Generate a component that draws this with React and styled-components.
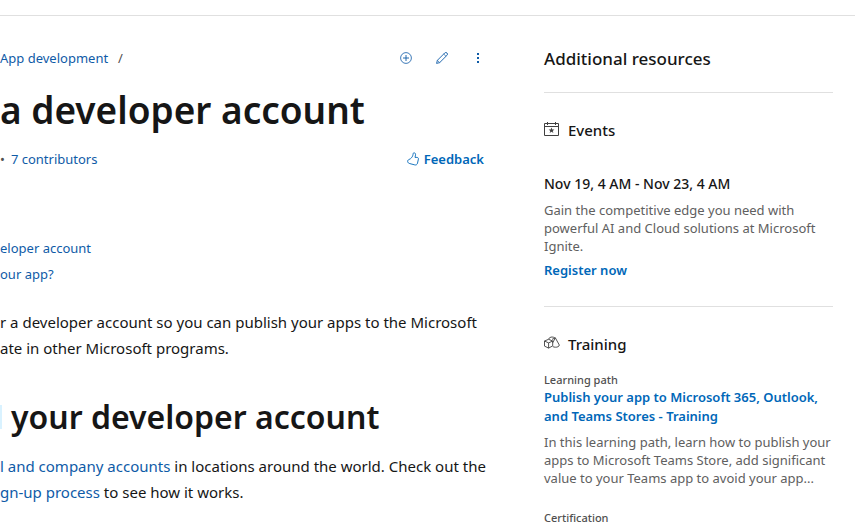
import styled, { createGlobalStyle } from "styled-components";

const tocItems = [
  { id: "open", title: "eloper account" },
  { id: "publish", title: "our app?" },
];

const AddIcon = () => (
  <svg width="12" height="12" viewBox="0 0 12 12" fill="none" stroke="currentColor" aria-hidden="true">
    <circle cx="6" cy="6" r="5.4" strokeWidth="0.8" />
    <path d="M6 3v6M3 6h6" strokeWidth="0.9" />
  </svg>
);

const PencilIcon = () => (
  <svg width="12" height="12" viewBox="0 0 12 12" fill="none" stroke="currentColor" strokeWidth="0.9" strokeLinejoin="round" aria-hidden="true">
    <path d="M0.6 11.4l0.8-3.1L8.7 1a1.6 1.6 0 0 1 2.3 2.3L3.7 10.6z" />
    <path d="M7.7 2l2.3 2.3M1.4 8.3l2.3 2.3" strokeWidth="0.7" />
  </svg>
);

const MoreIcon = () => (
  <svg width="12" height="12" viewBox="0 0 12 12" fill="currentColor" aria-hidden="true">
    <path d="M5 1h2v2H5zM5 5h2v2H5zM5 9h2v2H5z" />
  </svg>
);

const ThumbIcon = () => (
  <svg width="12" height="14" viewBox="0 0 12 14" fill="none" stroke="currentColor" strokeWidth="0.9" strokeLinejoin="round" aria-hidden="true">
    <path d="M3.5 6.7C5 5.5 5.7 4.3 6 2.6c.1-1.5.5-1.9 1.2-1.8 1.100.1 1.500 1.200 1.300 2.300L8 5.400h1.900c1.100 0 1.700.7 1.500 1.700l-.9 4.100c-.3 1.400-1.400 2-2.700 1.700l-5-1.300C1.600 11.300.9 10.700.7 9.700c-.2-1 .2-1.700 1.100-2.100z" />
  </svg>
);

const EventIcon = () => (
  <svg width="16" height="16" viewBox="0 0 16 16" fill="none" stroke="currentColor" aria-hidden="true">
    <path d="M0.5 2.5h14v12h-14zM0.5 5.5h14M3.5 1v3M11.5 1v3" />
    <path d="M7.5 6.6l.8 2h2.1L8.7 9.9l.7 2.1-1.9-1.3L5.6 12l.7-2.1-1.7-1.3h2.1z" fill="currentColor" stroke="none" />
  </svg>
);

const TrainingIcon = () => (
  <svg width="16" height="16" viewBox="0 0 16 16" fill="none" stroke="currentColor" strokeWidth="0.9" strokeLinejoin="round" aria-hidden="true">
    <path d="M4.600 4.300L8.700 6v4.900l-4.100 2.200-4.100-2V6zM.5 6l4.100 1.900L8.700 6M4.600 7.900v5.200" />
    <path d="M4.400 4.300C5.200 2.700 6.600 2 8.100 2c1.200 0 2.200.4 2.900 1.200M8.700 7.800l2.600-5 4 7.200c0 1.500-1.900 2.300-3.900 2.200-1 0-1.900-.2-2.600-.6M11.300 2.800L8 4.400" />
  </svg>
);

export default function App() {
  return (
    <>
      <GlobalStyle />
      <TopBar />
      <Layout>
        <Article>
          <BreadcrumbRow>
            <Breadcrumbs aria-label="Breadcrumb">
              <TextLink href="#app-development">App development</TextLink>
              <Separator>/</Separator>
            </Breadcrumbs>
            <Actions>
              <IconButton type="button" aria-label="Add to collection">
                <AddIcon />
              </IconButton>
              <IconButton type="button" aria-label="Edit">
                <PencilIcon />
              </IconButton>
              <IconButton type="button" aria-label="More actions">
                <MoreIcon />
              </IconButton>
            </Actions>
          </BreadcrumbRow>

          <PageTitle>a developer account</PageTitle>

          <MetaRow>
            <Contributors>
              <Dot>•</Dot>
              <TextLink href="#contributors">7 contributors</TextLink>
            </Contributors>
            <FeedbackButton type="button">
              <ThumbIcon />
              Feedback
            </FeedbackButton>
          </MetaRow>

          <Toc>
            {tocItems.map((item) => (
              <li key={item.id}>
                <TextLink href={`#${item.id}`}>{item.title}</TextLink>
              </li>
            ))}
          </Toc>

          <Paragraph>
            r a developer account so you can publish your apps to the Microsoft
            <br />
            ate in other Microsoft programs.
          </Paragraph>

          <SectionTitle>
            <Highlight />
            your developer account
          </SectionTitle>
          <Paragraph>
            <TextLink href="#accounts">l and company accounts</TextLink> in
            locations around the world. Check out the
            <br />
            <TextLink href="#sign-up">gn-up process</TextLink> to see how it
            works.
          </Paragraph>
        </Article>

        <Aside>
          <AsideTitle>Additional resources</AsideTitle>
          <Section>
            <SectionHeading>
              <EventIcon />
              Events
            </SectionHeading>
            <EventDate>Nov 19, 4 AM - Nov 23, 4 AM</EventDate>
            <Description>
              Gain the competitive edge you need with powerful AI and Cloud
              solutions at Microsoft Ignite.
            </Description>
            <StrongLink href="#register">Register now</StrongLink>
          </Section>
          <Section>
            <SectionHeading>
              <TrainingIcon />
              Training
            </SectionHeading>
            <Card>
              <Kind>Learning path</Kind>
              <StrongLink href="#training">
                Publish your app to Microsoft 365, Outlook, and Teams Stores -
                Training
              </StrongLink>
              <Description>
                In this learning path, learn how to publish your apps to
                Microsoft Teams Store, add significant value to your Teams app
                to avoid your app...
              </Description>
            </Card>
            <Card>
              <Kind>Certification</Kind>
            </Card>
          </Section>
        </Aside>
      </Layout>
    </>
  );
}

const GlobalStyle = createGlobalStyle`
  * {
    box-sizing: border-box;
  }
  body {
    margin: 0;
    background: #fff;
    color: #161616;
    font-family: "Noto Sans", "Open Sans", sans-serif;
    font-size: 15px;
    overflow-x: hidden;
  }
  h1, h2, h3, p, ul {
    margin: 0;
    padding: 0;
  }
  ul {
    list-style: none;
  }
  button {
    padding: 0;
    border: none;
    background: transparent;
    font-family: inherit;
    cursor: pointer;
  }
`;

const TopBar = styled.header`
  height: 16px;
  border-bottom: 1px solid #e0e0e0;
`;

const Layout = styled.div`
  display: grid;
  grid-template-columns: minmax(0, 1fr) 289px;
  column-gap: 56px;
  padding-right: 22px;
`;

const Article = styled.main`
  padding-top: 24px;
`;

const BreadcrumbRow = styled.div`
  display: flex;
  align-items: center;
  justify-content: space-between;
  height: 36px;
`;

const Breadcrumbs = styled.nav`
  display: flex;
  gap: 10px;
  font-size: 13px;
`;

const TextLink = styled.a`
  color: #0f5ba7;
  text-decoration: none;
  &:hover {
    text-decoration: underline;
  }
`;

const Separator = styled.span`
  color: #505050;
`;

const Actions = styled.div`
  display: flex;
  margin-right: -8px;
`;

const IconButton = styled.button`
  display: flex;
  align-items: center;
  justify-content: center;
  width: 36px;
  height: 36px;
  color: #0f5ba7;
`;

const PageTitle = styled.h1`
  margin-top: 8px;
  font-size: 37px;
  font-weight: 600;
  line-height: 52px;
`;

const MetaRow = styled.div`
  display: flex;
  align-items: center;
  justify-content: space-between;
  height: 24px;
  margin-top: 11px;
  padding-right: 4px;
`;

const Contributors = styled.div`
  display: flex;
  gap: 6px;
  font-size: 13px;
`;

const Dot = styled.span`
  color: #505050;
`;

const FeedbackButton = styled.button`
  display: flex;
  align-items: center;
  gap: 5px;
  color: #0067b8;
  font-size: 13px;
  font-weight: 600;
`;

const Toc = styled.ul`
  margin-top: 64px;
  font-size: 13px;
  line-height: 26px;
`;

const Paragraph = styled.p`
  margin-top: 22px;
  line-height: 26px;
  white-space: nowrap;
  h2 + & {
    margin-top: 16px;
  }
`;

const SectionTitle = styled.h2`
  display: flex;
  align-items: center;
  gap: 9px;
  margin-top: 36px;
  font-size: 32px;
  font-weight: 600;
  line-height: 40px;
`;

const Highlight = styled.span`
  width: 2px;
  height: 24px;
  background: #d9f2ff;
`;

const Aside = styled.aside`
  padding-top: 31px;
`;

const AsideTitle = styled.h2`
  margin-bottom: 21px;
  font-size: 17px;
  font-weight: 500;
  line-height: 24px;
`;

const Section = styled.section`
  padding: 25px 0 26px;
  border-top: 1px solid #e0e0e0;
  &:last-child {
    padding-bottom: 0;
  }
`;

const SectionHeading = styled.h3`
  display: flex;
  align-items: center;
  gap: 8px;
  font-size: 15px;
  font-weight: 500;
  line-height: 24px;
  svg {
    margin-bottom: 2px;
    color: #404040;
  }
`;

const EventDate = styled.p`
  margin-top: 32px;
  font-size: 14px;
  font-weight: 500;
  line-height: 20px;
`;

const Description = styled.p`
  margin: 7px 0 6px;
  color: #606060;
  font-size: 13px;
  line-height: 18px;
`;

const StrongLink = styled.a`
  display: block;
  color: #0067b8;
  font-size: 13px;
  font-weight: 600;
  line-height: 19px;
  text-decoration: none;
  &:hover {
    text-decoration: underline;
  }
`;

const Card = styled.div`
  margin-top: 16px;
  & + & {
    margin-top: 23px;
  }
`;

const Kind = styled.p`
  color: #505050;
  font-size: 11px;
  font-weight: 500;
  line-height: 16px;
`;
